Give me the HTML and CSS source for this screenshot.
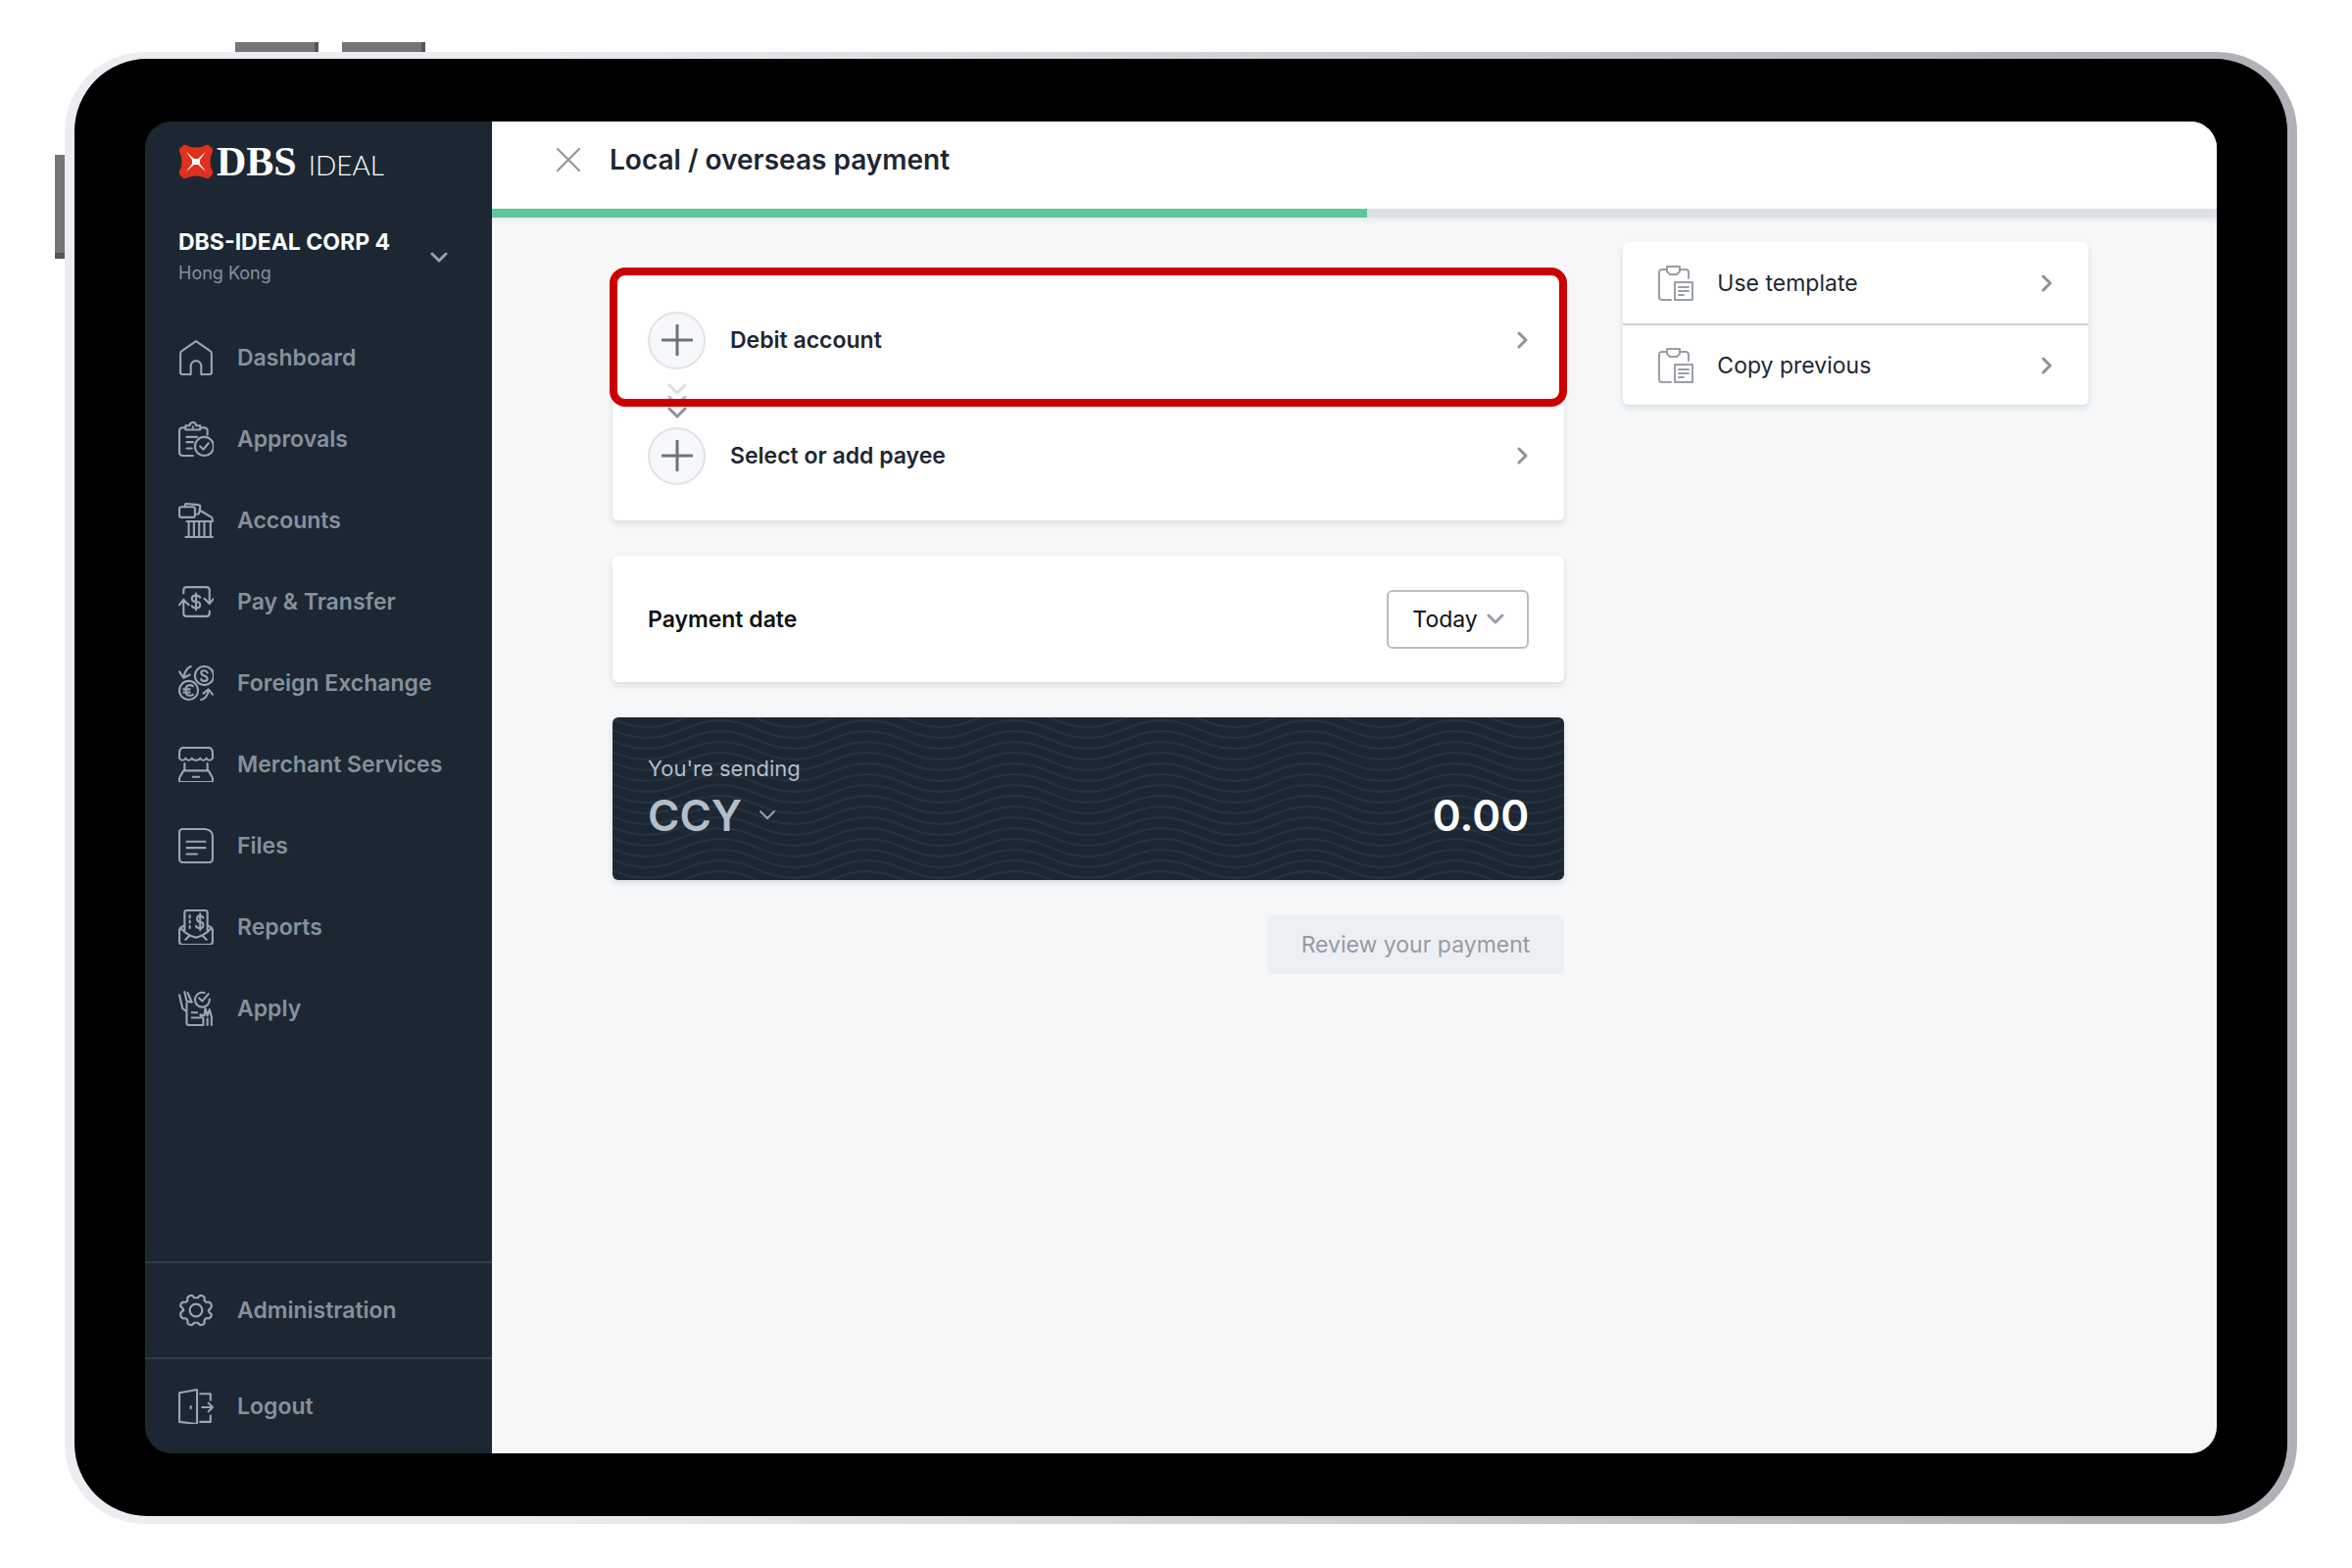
FILE: index.html
```html
<!DOCTYPE html>
<html lang="en">
<head>
    <meta charset="UTF-8">
    <title>DBS IDEAL - Local / overseas payment</title>
    <meta name="viewport" content="width=device-width, initial-scale=1">
    <link rel="stylesheet" href="styles.css">
</head>
<body>
<svg class="defs" aria-hidden="true">
    <symbol id="right" viewBox="0 0 12 20"><path d="M2 3l7 7-7 7"/></symbol>
    <symbol id="down" viewBox="0 0 20 12"><path d="M3 2l7 7 7-7"/></symbol>
    <symbol id="plus" viewBox="0 0 32 32"><path d="M16 1v30M1 16h30"/></symbol>
    <symbol id="paste" viewBox="0 0 36 36"><path d="M9 4H4a3 3 0 0 0-3 3v25a3 3 0 0 0 3 3h9M22 4h6a3 3 0 0 1 3 3v6M9 1h13v5l-3 3h-7L9 6zM17 17h18v18H17zM21 22h10M21 26h10M21 30h5"/></symbol>
</svg>
<div class="device">
    <i class="key key-up"></i>
    <i class="key key-down"></i>
    <i class="key key-power"></i>
    <div class="screen">
        <aside class="side">
            <div class="logo">
                <svg class="logo-mark" viewBox="0 0 36 36"><path fill="#e0301e" d="M3 3q3-4 7-1 8 3 16 0 4-3 7 1 4 3 1 7-3 8 0 16 3 4-1 7-3 4-7 1-8-3-16 0-4 3-7-1-4-3-1-7 3-8 0-16-3-4 1-7z"/><path fill="#fff" d="M8 8l8 7h4l8-7-6 8v4l6 8-8-7h-4l-8 7 6-8v-4z"/></svg>
                <span class="logo-dbs">DBS</span>
                <span class="logo-ideal">IDEAL</span>
            </div>
            <button class="corp" type="button">
                <span><b>DBS-IDEAL CORP 4</b><small>Hong Kong</small></span>
                <svg class="ico-down"><use href="#down"/></svg>
            </button>
            <nav class="menu">
                <a href="#"><svg viewBox="0 0 34 34"><path d="M4 33a2 2 0 0 1-2-2V13q0-2 2-3L17 1l13 9q2 1 2 3v18a2 2 0 0 1-2 2h-8v-8a5 5 0 0 0-10 0v8z"/></svg>Dashboard</a>
                <a href="#"><svg viewBox="0 0 34 34"><path d="M14 33H4a3 3 0 0 1-3-3V9a3 3 0 0 1 3-3h3V4h4q0-3 3-3t3 3h4v2h4a3 3 0 0 1 3 3v4M7 6v2h14V6M14 5v1M8 15h10M8 20h6M8 26h5"/><circle cx="25" cy="24" r="9"/><path d="M21 24l3 3 5-6"/></svg>Approvals</a>
                <a href="#"><svg viewBox="0 0 34 34"><rect x="1" y="4" width="15" height="10" rx="2"/><path d="M6 4l1-3 12 1q2 0 2 2l-1 6q0 1-2 1M22 8l10 6q1 1 1 4H8M10 18v14M15 18v14M20 18v14M25 18v14M31 18v14M7 33h26"/></svg>Accounts</a>
                <a href="#"><svg viewBox="0 0 34 34"><path d="M5 9V6q0-3 3-3h19q3 0 3 3v12M25 14l5 5 4-5M30 26v2q0 3-3 3H8q-3 0-3-3V15M1 20l4-5 5 5"/><path d="M21 13q-1-2-4-2-4 0-4 3t4 3q4 0 4 3t-4 3q-3 0-4-2M17 9v16"/></svg>Pay &amp; Transfer</a>
                <a href="#"><svg viewBox="0 0 34 34"><circle cx="25" cy="10" r="9"/><circle cx="10" cy="24" r="9"/><path d="M28 7q-1-2-3-2-3 0-3 2t3 3 3 3-3 2q-3 0-3-2M14 20q-1-1-3-1-4 0-4 5t4 5q2 0 3-1M5 23h6M5 26h6M12 1Q7 3 5 11M1 6l4 6 6-3M22 33q5-1 7-8M24 27l5-4 4 5"/></svg>Foreign Exchange</a>
                <a href="#"><svg viewBox="0 0 34 34"><path d="M4 1h26q3 1 3 5v5q-1 2-3 2t-3-2q-1 2-3 2t-3-2q-1 2-4 2t-4-2q-1 2-3 2t-3-2q-1 2-3 2t-3-2V6q0-4 3-5zM6 16v7M28 16v7M5 23h24l4 7v2q0 2-2 2H3q-2 0-2-2v-2zM14 29h6"/></svg>Merchant Services</a>
                <a href="#"><svg viewBox="0 0 34 34"><path d="M4 1h22q7 1 7 7v22a3 3 0 0 1-3 3H4a3 3 0 0 1-3-3V4a3 3 0 0 1 3-3zM8 13h18M8 19h18M8 25h10"/></svg>Files</a>
                <a href="#"><svg viewBox="0 0 34 34"><path d="M6 22V3q0-2 2-2h18q2 0 2 2v19M5 16q-4 1-4 4v11q0 3 3 3h26q3 0 3-3V20q0-3-4-4M2 18q8 8 15 9 7-1 15-9M7 29l4-4M27 29l-4-4M11 6v2M11 11v2M11 16v2"/><path d="M24 8q-1-2-3-2-3 0-3 3t3 3 3 3-3 3q-3 0-4-2M21 4v16"/></svg>Reports</a>
                <a href="#"><svg viewBox="0 0 34 34"><path d="M1 4l3 13 4 3V12M6 1l2 9 5 1-4-9M8 20v11q0 2 2 2h13M13 21h5M13 26h8M30 8A7 7 0 1 1 25 2M20 7l3 3 6-7M24 33v-6l-3-4 4 1 1-7 2 7 2-6 2 7v8M28 33v-6"/></svg>Apply</a>
            </nav>
            <nav class="menu menu-foot">
                <a href="#"><svg viewBox="0 0 34 34"><path d="M11 3q3-1 4 2h4q1-3 4-2 3 1 2 4 1 3 4 2 3 1 3 4 0 2-3 4 0 2 3 4 0 3-3 4-3-1-4 2 1 3-2 4-3 1-4-2h-4q-1 3-4 2-3-1-2-4-1-3-4-2-3-1-3-4 0-2 3-4 0-2-3-4 0-3 3-4 3 1 4-2-1-3 2-4z"/><circle cx="17" cy="17" r="6"/></svg>Administration</a>
                <a href="#"><svg viewBox="0 0 34 34"><path d="M1 4l17-3v33L1 32zM12 17v2M21 5h10v6M21 32h10v-6M23 18h10M29 14l4 4-4 4"/></svg>Logout</a>
            </nav>
        </aside>
        <main class="main">
            <header class="bar">
                <button class="close" type="button" aria-label="Close"><svg viewBox="0 0 24 24"><path d="M1 1l22 22M23 1L1 23"/></svg></button>
                <h1>Local / overseas payment</h1>
            </header>
            <div class="progress"><i></i></div>
            <div class="content">
                <form class="form">
                    <section class="card steps">
                        <button class="step on" type="button">
                            <span class="add"><svg><use href="#plus"/></svg></span>
                            Debit account
                            <svg class="ico-right"><use href="#right"/></svg>
                        </button>
                        <svg class="flow" viewBox="0 0 20 36"><path opacity=".3" d="M2 2l8 8 8-8"/><path opacity=".6" d="M2 14l8 8 8-8"/><path d="M2 26l8 8 8-8"/></svg>
                        <button class="step" type="button">
                            <span class="add"><svg><use href="#plus"/></svg></span>
                            Select or add payee
                            <svg class="ico-right"><use href="#right"/></svg>
                        </button>
                    </section>
                    <section class="card date">
                        <label for="date">Payment date</label>
                        <div class="pick">
                            <select id="date"><option>Today</option></select>
                            <svg class="ico-down"><use href="#down"/></svg>
                        </div>
                    </section>
                    <section class="card send">
                        <svg class="waves" aria-hidden="true">
                            <defs>
                                <pattern id="wave" width="150" height="11" patternUnits="userSpaceOnUse">
                                    <path d="M-40 3C-10 3 5 21 35 21S80 3 110 3s45 18 75 18"/>
                                    <path d="M-40-8C-10-8 5 10 35 10S80-8 110-8s45 18 75 18"/>
                                    <path d="M-40-19C-10-19 5-1 35-1s45-18 75-18 45 18 75 18"/>
                                </pattern>
                            </defs>
                            <rect width="100%" height="100%" fill="url(#wave)" stroke="none"/>
                        </svg>
                        <label for="ccy">You're sending</label>
                        <div class="amount">
                            <div class="pick">
                                <select id="ccy"><option>CCY</option></select>
                                <svg class="ico-down"><use href="#down"/></svg>
                            </div>
                            <input type="text" value="0.00" aria-label="Amount">
                        </div>
                    </section>
                    <button class="review" type="submit" disabled>Review your payment</button>
                </form>
                <aside class="card links">
                    <a href="#"><svg class="ico-paste"><use href="#paste"/></svg>Use template<svg class="ico-right"><use href="#right"/></svg></a>
                    <a href="#"><svg class="ico-paste"><use href="#paste"/></svg>Copy previous<svg class="ico-right"><use href="#right"/></svg></a>
                </aside>
            </div>
        </main>
    </div>
</div>
</body>
</html>
```
FILE: styles.css
```css
*{margin:0;padding:0;box-sizing:border-box;}
body{display:flex;min-height:100vh;padding:53px 56px 45px 66px;background:#fff;color:#1c2733;font:23px/32px Inter,"Liberation Sans",sans-serif;}
a{color:inherit;text-decoration:none;}
button,select,input{border:0;background:none;color:inherit;font:inherit;text-align:left;}
select{appearance:none;-webkit-appearance:none;}
svg{display:block;flex:none;fill:none;stroke:currentColor;stroke-width:2;stroke-linecap:round;stroke-linejoin:round;}
.defs{position:absolute;width:0;height:0;}

/* tablet */
.device{position:relative;display:flex;flex:1;padding:7px 10px 8px;border-radius:82px;background:linear-gradient(90deg,#ecedf1 20%,#b1b1b7 92%);}
.screen{display:flex;flex:1;border:solid #000;border-width:64px 72px;border-radius:74px;background:#000;overflow:hidden;}
.key{position:absolute;background:#747579;}
.key-up,.key-down{top:-10px;width:85px;height:10px;border-right:4px solid #55565a;}
.key-up{left:174px;}
.key-down{left:283px;}
.key-power{top:105px;left:-10px;width:10px;height:106px;border-bottom:6px solid #55565a;}

/* sidebar */
.side{display:flex;flex-direction:column;flex:none;width:354px;border-radius:27px 0 0 27px;background:#1c2733;color:#87919b;}
.logo{display:flex;align-items:center;height:82px;padding-left:34px;color:#fff;}
.logo-mark{width:36px;height:36px;stroke:none;}
.logo-dbs{margin-left:3px;font:bold 42px/44px "Liberation Serif",serif;}
.logo-ideal{margin:6px 0 0 12px;font:300 28px/32px Lato,sans-serif;}
.corp{display:flex;align-items:center;justify-content:space-between;height:114px;padding:0 44px 0 34px;}
.corp b,.corp small{display:block;}
.corp b{color:#fff;font-weight:700;}
.corp small{font-size:18px;}
.corp .ico-down{stroke-width:3;}
.menu{font-weight:600;}
.corp + .menu{padding-top:3px;}
.menu a{display:flex;align-items:center;gap:24px;height:83px;padding-left:34px;}
.menu svg{width:36px;height:36px;color:#9aa5b1;}
.menu-foot{margin-top:auto;}
.menu-foot a{height:98px;border-top:2px solid #313c49;}

/* page */
.main{flex:1;border-radius:0 27px 27px 0;background:#f5f7f9;overflow:hidden;}
.bar{display:flex;align-items:center;gap:30px;height:89px;padding:0 66px 12px;background:#fff;}
.bar h1{font-size:28px;font-weight:600;}
.close svg{width:24px;height:24px;color:#8d9299;}
.progress{height:9px;background:#dde1e6;box-shadow:0 2px 6px rgba(28,39,51,.08);}
.progress i{display:block;width:893px;height:100%;background:#5ec79b;}
.content{display:grid;grid-template-columns:972fr 475fr;gap:60px;align-items:start;padding:25px 131px 40px 123px;}
.card{border-radius:6px;background:#fff;box-shadow:0 3px 6px rgba(28,39,51,.12);}
.ico-right{width:12px;height:20px;margin-left:auto;color:#8d9299;stroke-width:3;}
.ico-down{width:20px;height:12px;color:#9aa0a8;}

.form{display:flex;flex-direction:column;gap:36px;padding-top:32px;}
.steps{position:relative;padding:9px 0 7px;}
.step{position:relative;display:flex;align-items:center;gap:25px;width:100%;height:118px;padding:0 36px;font-weight:600;}
.step.on{z-index:1;}
.step.on:after{content:"";position:absolute;inset:-15px -3px -9px;border:8px solid #c00;border-radius:16px;}
.add{display:flex;align-items:center;justify-content:center;width:59px;height:59px;border:2px solid #e0e3e8;border-radius:50%;background:#f5f7f9;color:#6d737b;}
.add svg{width:32px;height:32px;stroke-width:3;}
.flow{position:absolute;top:112px;left:56px;width:20px;height:36px;color:#8d9299;stroke-width:3;}
.date{display:flex;align-items:center;justify-content:space-between;height:129px;padding:0 36px;color:#111;}
.date label{font-weight:600;}
.pick{position:relative;}
.pick select{display:block;}
.pick .ico-down{position:absolute;top:50%;margin-top:-6px;pointer-events:none;}
.date select{width:145px;height:60px;padding-left:24px;border:2px solid #b9bdc2;border-radius:6px;}
.date .ico-down{right:24px;stroke-width:3;}
.send{position:relative;height:166px;padding:36px;background:#1c2733;color:#b4bdc8;overflow:hidden;}
.send label,.amount{position:relative;}
.send label{font-size:22px;}
.waves{position:absolute;top:0;left:0;width:100%;height:100%;color:#263340;}
.amount{display:flex;justify-content:space-between;align-items:center;font-size:44px;line-height:64px;font-weight:600;}
.amount select{width:132px;}
.amount .ico-down{right:0;}
.amount input{width:400px;color:#fff;text-align:right;}
.review{align-self:flex-end;height:60px;padding:0 35px;border-radius:4px;background:#edf0f3;color:#959ba3;}

.links a{display:flex;align-items:center;gap:24px;height:83px;padding:0 36px;}
.links a + a{border-top:2px solid #cfd2d6;}
.ico-paste{width:36px;height:36px;color:#9a9fa6;}
```
